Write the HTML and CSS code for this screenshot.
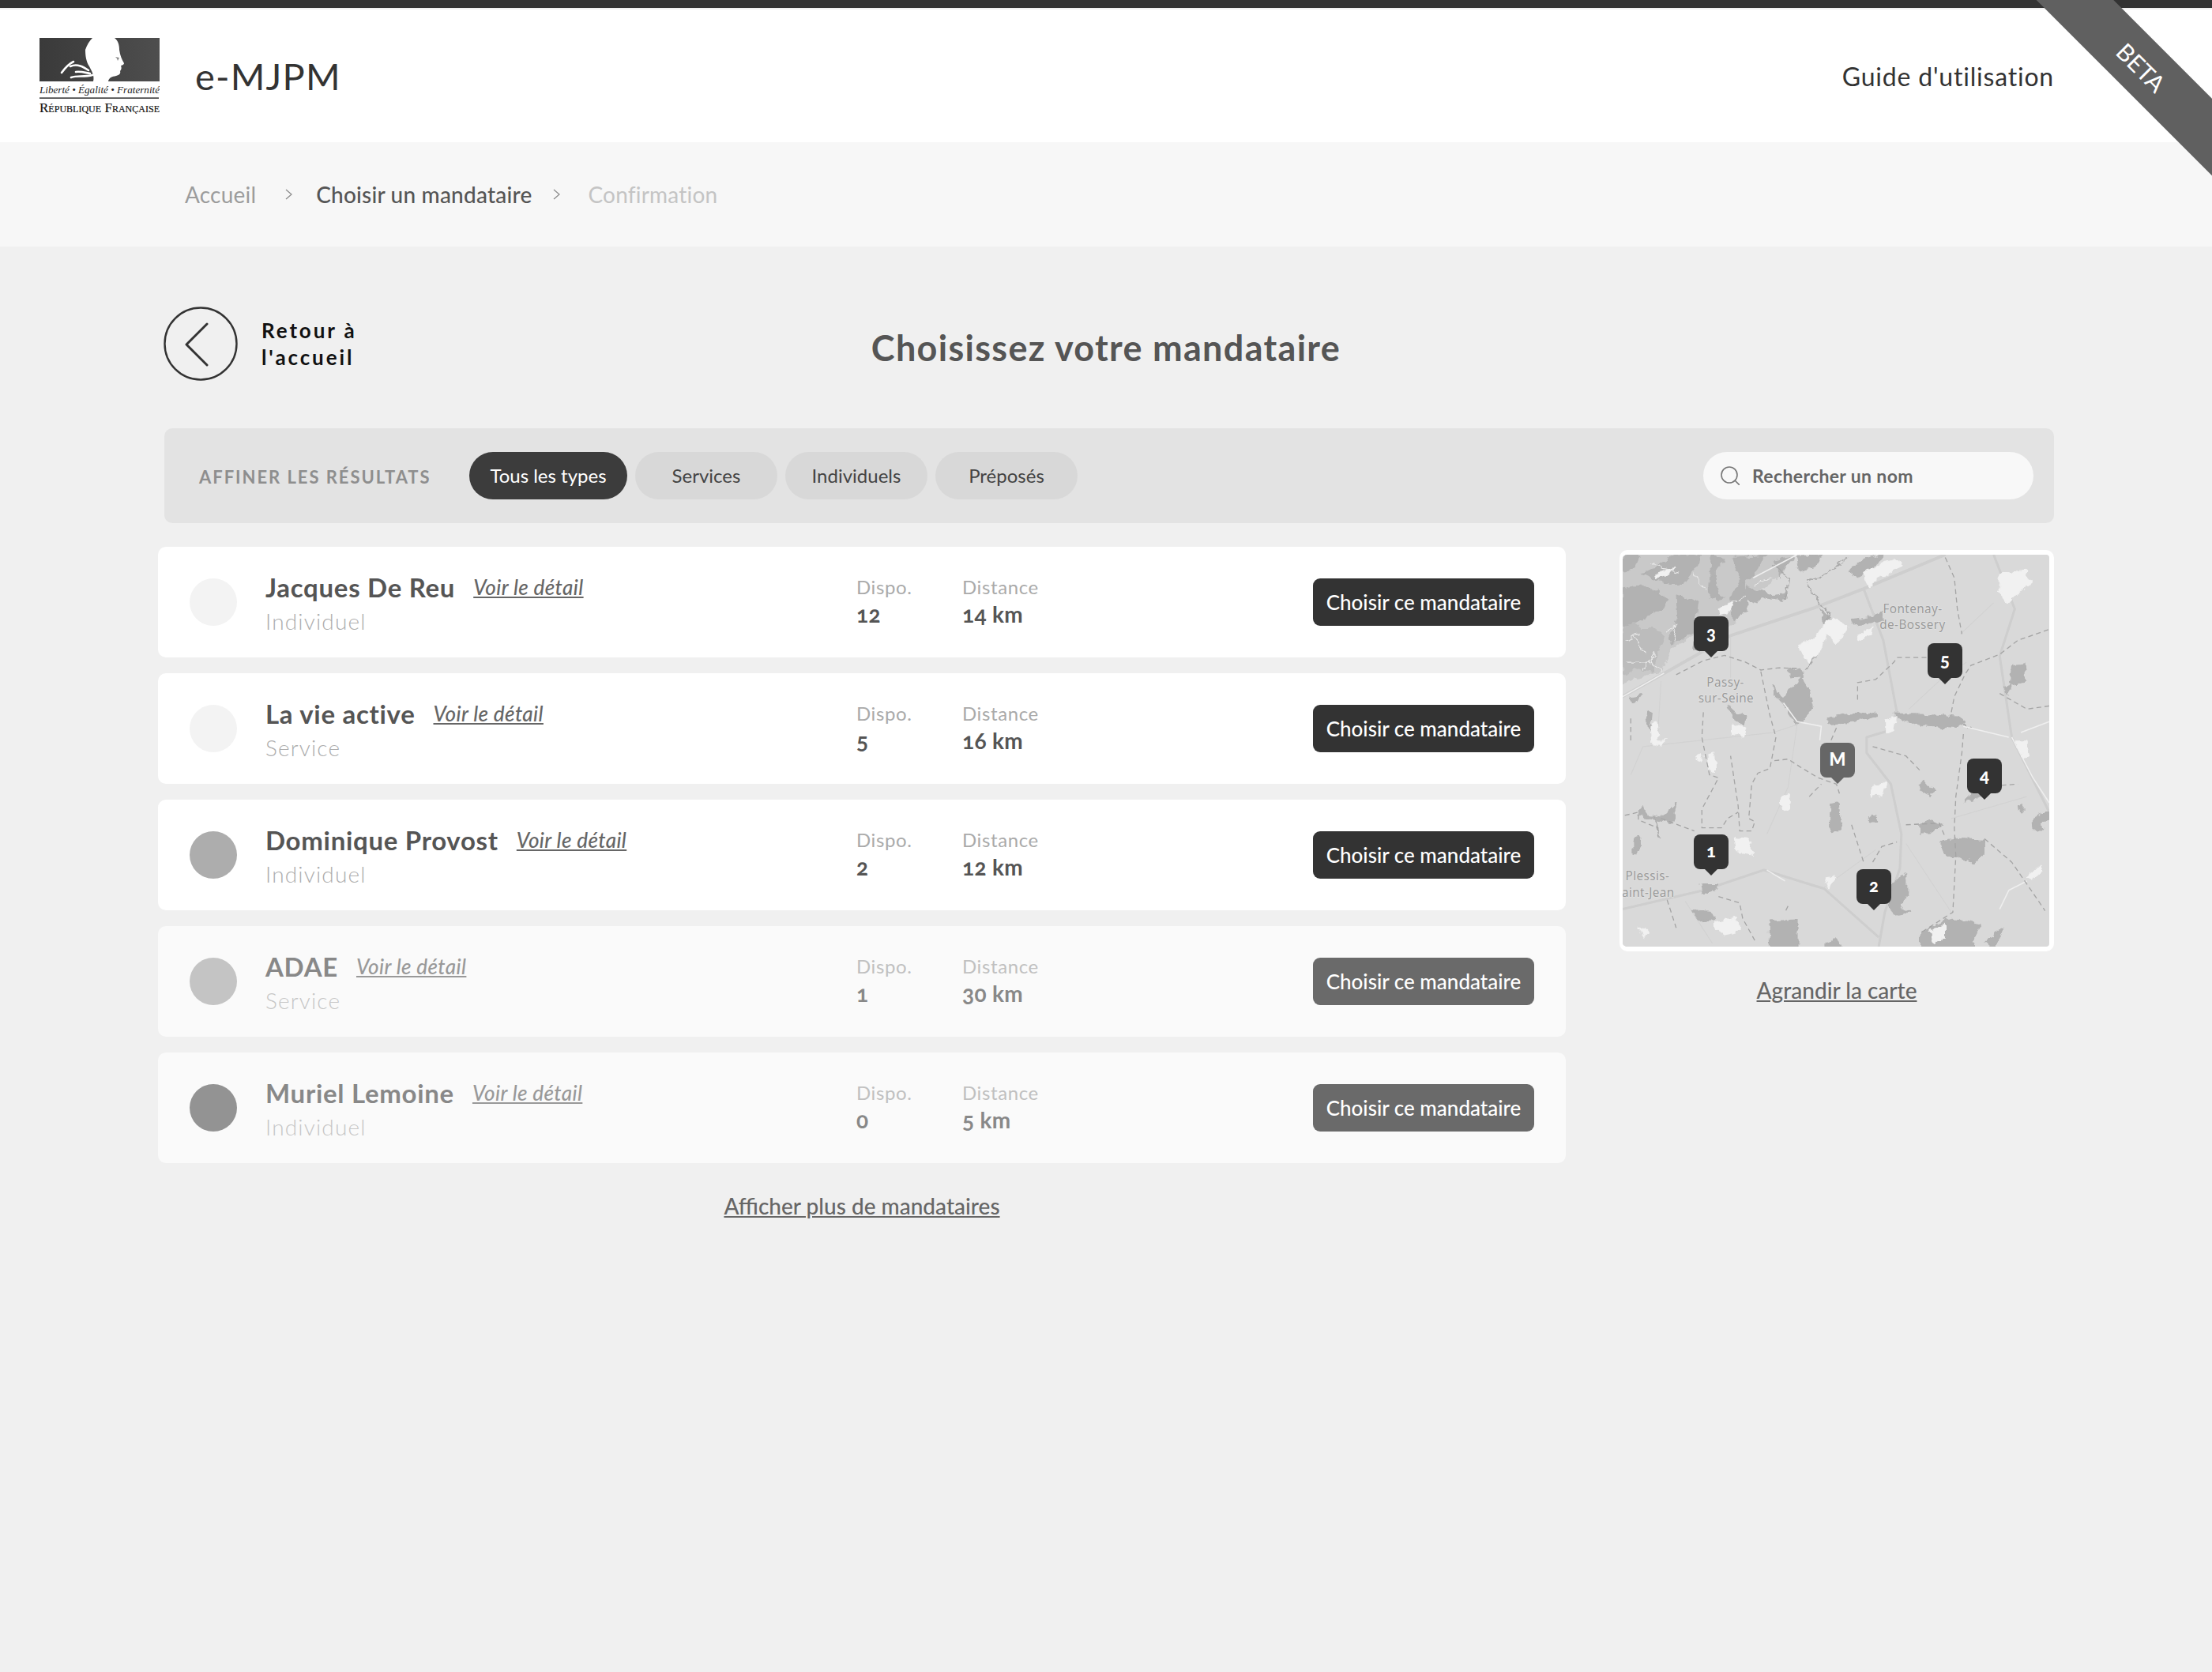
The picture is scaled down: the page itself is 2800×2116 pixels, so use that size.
FILE: index.html
```html
<!DOCTYPE html>
<html lang="fr">
<head>
    <meta charset="UTF-8">
    <meta name="viewport" content="width=device-width, initial-scale=1.0">
    <title>e-MJPM</title>
    <link rel="stylesheet" href="styles.css">
</head>
<body>
    <div class="ribbon-clip"><div class="ribbon"><span>BETA</span></div></div>
    <div class="topbar"></div>
    <header class="site-header">
        <svg class="logo" viewBox="0 0 152 96">
            <defs>
                <linearGradient id="logo-bg" x1="0" x2="1" y1="0" y2="0">
                    <stop offset="0" stop-color="#3a3a3a"/>
                    <stop offset="1" stop-color="#4e4e4e"/>
                </linearGradient>
            </defs>
            <rect width="152" height="55" fill="url(#logo-bg)"/>
            <path fill="#fff" d="M67 0 L95 0 C99 3 101 8 101 15 C102 22 104 27 107 32 C107 34 104 35 103 35 C104 37 104 40 102 42 C103 45 101 47 97 48 C92 49 88 50 87 55 L68 55 C70 48 66 42 63 36 C59 30 58 22 58 15 C60 9 63 4 67 0Z"/>
            <path fill="none" stroke="#fff" stroke-width="2.6" stroke-linecap="round" d="M28 44 C33 37 37 33 43 30 M39 36 C48 32 56 37 62 41 M40 50 C48 47 56 50 67 47 M46 43 C52 42 58 44 64 45"/>
            <path fill="#888" d="M96 24 L101 25 L99 29 L98 26Z"/>
            <text class="logo-motto" x="0" y="70" textLength="152" lengthAdjust="spacingAndGlyphs">Liberté • Égalité • Fraternité</text>
            <rect y="75.4" width="151" height="1.4" fill="#222"/>
            <text class="logo-name" x="0" y="93.5" textLength="152" lengthAdjust="spacingAndGlyphs">République Française</text>
        </svg>
        <span class="brand">e-MJPM</span>
        <a class="guide" href="#">Guide d'utilisation</a>
    </header>

    <nav class="breadcrumb">
        <a class="crumb" href="#">Accueil</a>
        <svg class="crumb-sep crumb-sep--first" viewBox="0 0 9 14"><path d="M1 1 L8 7 L1 13" fill="none" stroke="#888" stroke-width="1.2"/></svg>
        <span class="crumb crumb--current">Choisir un mandataire</span>
        <svg class="crumb-sep" viewBox="0 0 9 14"><path d="M1 1 L8 7 L1 13" fill="none" stroke="#888" stroke-width="1.2"/></svg>
        <span class="crumb crumb--next">Confirmation</span>
    </nav>

    <main class="page">
        <div class="page-head">
            <a class="back" href="#">
                <svg class="back-icon" viewBox="0 0 94 94">
                    <circle cx="47" cy="47" r="45.5" fill="none" stroke="#333" stroke-width="2.4"/>
                    <path d="M55 22 L29 48 L55 74" fill="none" stroke="#333" stroke-width="3" stroke-linecap="round" stroke-linejoin="round"/>
                </svg>
                <span class="back-label">Retour à<br>l'accueil</span>
            </a>
            <h1 class="page-title">Choisissez votre mandataire</h1>
        </div>

        <div class="filters">
            <span class="filters-label">AFFINER LES RÉSULTATS</span>
            <div class="pills">
                <button class="pill pill--active">Tous les types</button>
                <button class="pill">Services</button>
                <button class="pill">Individuels</button>
                <button class="pill">Préposés</button>
            </div>
            <div class="search">
                <svg class="search-icon" viewBox="0 0 24 24"><circle cx="11" cy="11" r="10" fill="none" stroke="#777" stroke-width="1.6"/><path d="M18 18 L24 24" stroke="#777" stroke-width="1.6"/></svg>
                <span>Rechercher un nom</span>
            </div>
        </div>

        <div class="results">
            <section class="list">
                <article class="row">
                    <span class="avatar avatar--pale"></span>
                    <div class="row-info">
                        <div class="row-title"><span class="name">Jacques De Reu</span><a class="detail" href="#">Voir le détail</a></div>
                        <div class="kind">Individuel</div>
                    </div>
                    <div class="stat stat--dispo"><span class="stat-label">Dispo.</span><span class="stat-value">12</span></div>
                    <div class="stat"><span class="stat-label">Distance</span><span class="stat-value">14 km</span></div>
                    <button class="choose">Choisir ce mandataire</button>
                </article>
                <article class="row">
                    <span class="avatar avatar--pale"></span>
                    <div class="row-info">
                        <div class="row-title"><span class="name">La vie active</span><a class="detail" href="#">Voir le détail</a></div>
                        <div class="kind">Service</div>
                    </div>
                    <div class="stat stat--dispo"><span class="stat-label">Dispo.</span><span class="stat-value">5</span></div>
                    <div class="stat"><span class="stat-label">Distance</span><span class="stat-value">16 km</span></div>
                    <button class="choose">Choisir ce mandataire</button>
                </article>
                <article class="row">
                    <span class="avatar avatar--mid"></span>
                    <div class="row-info">
                        <div class="row-title"><span class="name">Dominique Provost</span><a class="detail" href="#">Voir le détail</a></div>
                        <div class="kind">Individuel</div>
                    </div>
                    <div class="stat stat--dispo"><span class="stat-label">Dispo.</span><span class="stat-value">2</span></div>
                    <div class="stat"><span class="stat-label">Distance</span><span class="stat-value">12 km</span></div>
                    <button class="choose">Choisir ce mandataire</button>
                </article>
                <article class="row row--muted">
                    <span class="avatar avatar--light"></span>
                    <div class="row-info">
                        <div class="row-title"><span class="name">ADAE</span><a class="detail" href="#">Voir le détail</a></div>
                        <div class="kind">Service</div>
                    </div>
                    <div class="stat stat--dispo"><span class="stat-label">Dispo.</span><span class="stat-value">1</span></div>
                    <div class="stat"><span class="stat-label">Distance</span><span class="stat-value">30 km</span></div>
                    <button class="choose">Choisir ce mandataire</button>
                </article>
                <article class="row row--muted">
                    <span class="avatar avatar--dark"></span>
                    <div class="row-info">
                        <div class="row-title"><span class="name">Muriel Lemoine</span><a class="detail" href="#">Voir le détail</a></div>
                        <div class="kind">Individuel</div>
                    </div>
                    <div class="stat stat--dispo"><span class="stat-label">Dispo.</span><span class="stat-value">0</span></div>
                    <div class="stat"><span class="stat-label">Distance</span><span class="stat-value">5 km</span></div>
                    <button class="choose">Choisir ce mandataire</button>
                </article>
                <a class="more" href="#">Afficher plus de mandataires</a>
            </section>

            <aside class="side">
                <div class="map">
                    <svg class="map-art" viewBox="63 56 1411 1254" preserveAspectRatio="none">
                        <defs>
                            <filter id="rough" filterUnits="userSpaceOnUse" x="63" y="56" width="1411" height="1254">
                                <feTurbulence type="fractalNoise" baseFrequency="0.035" numOctaves="3" seed="4" result="noise"/>
                                <feDisplacementMap in="SourceGraphic" in2="noise" scale="26" xChannelSelector="R" yChannelSelector="G"/>
                                <feGaussianBlur stdDeviation="1.4"/>
                            </filter>
                            <filter id="soft" filterUnits="userSpaceOnUse" x="63" y="56" width="1411" height="1254">
                                <feGaussianBlur stdDeviation="1"/>
                            </filter>
                        </defs>
                        <rect x="63" y="56" width="1411" height="1254" fill="#d9d9d9"/>
                        <!-- roads -->
                        <g filter="url(#soft)" fill="none" stroke="#cecece" stroke-width="10" stroke-linejoin="round">
                            <path d="M63 510 L210 430 L420 315 L700 225 L860 165 L1130 56"/>
                            <path stroke-width="8" d="M860 165 L925 330 L970 560 L940 620 L870 640 L870 690 L950 790 L985 950 L980 1060 L930 1200 L910 1310"/>
                            <path stroke-width="8" d="M1290 56 L1360 230 L1310 380 L1350 640 L1474 880"/>
                            <path stroke-width="8" d="M63 1190 L330 1130 L530 1065 L730 1125 L910 1280"/>
                        </g>
                        <g filter="url(#soft)" fill="none" stroke="#d2d2d2" stroke-width="3">
                            <path d="M90 760 L130 670 L560 625 L640 600 L610 800 L540 950"/>
                            <path d="M190 460 L180 620 M420 320 L420 450 M1010 550 L1110 460 L1200 400 M1180 310 L1290 210 M1000 980 L1150 1200 M1150 900 L1400 830 M730 1120 L900 1000 M270 1165 L360 1300"/>
                        </g>
                        <!-- woods and water -->
                        <path filter="url(#rough)" fill="#c9c9c9" d="M50 40 L640 40 L590 120 L470 210 L430 280 L300 310 L225 360 L190 430 L50 470Z"/>
                        <g filter="url(#rough)" fill="#b2b2b2" stroke="#b2b2b2" stroke-width="4" stroke-linejoin="round">
                            <path d="M63 166 L130 150 L183 179 L213 200 L200 225 L148 251 L96 280 L63 285Z"/>
                            <path d="M244 183 L313 209 L296 301 L226 343 L217 327 L248 259Z"/>
                            <path fill="#bcbcbc" stroke="#bcbcbc" d="M63 293 L104 276 L122 293 L165 293 L200 318 L174 377 L165 428 L113 419 L63 445Z"/>
                            <path d="M130 116 L183 90 L239 57 L322 57 L313 90 L261 150 L217 150 L165 133Z"/>
                            <path d="M357 57 L400 74 L366 116 L379 183 L400 192 L348 200Z"/>
                            <path d="M427 65 L540 57 L505 107 L461 150 L479 234 L427 268 L418 200 L453 133Z"/>
                            <path d="M566 74 L627 65 L592 107 L583 133Z"/>
                            <path d="M470 158 L548 183 L610 175 L592 200 L540 192 L487 209 L461 192Z"/>
                            <path d="M640 60 L720 56 L690 100 L650 110Z"/>
                            <path d="M820 100 L860 70 L900 56 L930 60 L870 110 L830 130Z"/>
                            <path d="M63 56 L115 56 L100 95 L63 115Z"/>
                            <path d="M300 330 L335 320 L320 360 L295 365Z"/>
                            <path d="M610 425 L650 420 L660 440 L620 450Z"/>
                            <path d="M560 475 L590 520 L640 470 L650 440 L680 490 L690 540 L640 600 L600 540 L570 510Z"/>
                            <path d="M715 230 L750 260 L735 290Z"/>
                            <path d="M740 580 L800 565 L900 560 L905 575 L830 590 L750 600Z"/>
                            <path d="M960 565 L1060 568 L1170 575 L1195 595 L1170 610 L1080 605 L1000 590Z"/>
                            <path d="M1115 975 L1170 965 L1260 970 L1260 1010 L1220 1040 L1170 1020 L1135 1020Z"/>
                            <path d="M950 1110 L1000 1080 L1000 1150 L985 1185 L1010 1200 L960 1210 L945 1180Z"/>
                            <path d="M750 850 L775 845 L785 930 L760 945 L750 920Z"/>
                            <path d="M885 890 L900 895 L900 910 L885 910Z"/>
                            <path d="M320 1110 L380 1110 L370 1130 L325 1140Z"/>
                            <path d="M295 1195 L350 1200 L365 1225 L320 1230Z"/>
                            <path d="M1045 925 L1080 900 L1115 920 L1080 945 L1050 945Z"/>
                            <path d="M1040 790 L1060 775 L1090 810 L1080 830 L1045 810Z"/>
                            <path d="M1185 850 L1230 810 L1270 815 L1250 830Z"/>
                            <path d="M1350 410 L1390 405 L1395 460 L1345 470Z"/>
                            <path d="M1325 480 L1345 475 L1340 500 L1325 495Z"/>
                            <path d="M1420 900 L1450 885 L1480 885 L1480 905 L1445 910 L1450 935 L1425 935Z"/>
                            <path d="M1370 860 L1390 855 L1390 880 L1370 875Z"/>
                            <path d="M100 965 L120 960 L115 1010 L100 1010Z"/>
                            <path d="M150 560 L160 565 L155 610 L140 590Z"/>
                            <path d="M410 540 L435 560 L470 570 L465 600 L430 580Z"/>
                            <path d="M825 265 L880 258 L925 240 L930 260 L880 275 L830 280Z"/>
                            <path d="M85 515 L125 505 L105 530Z"/>
                            <path d="M115 890 L130 860 L135 885 L200 895 L240 855 L225 915 L190 905Z"/>
                            <path d="M548 1230 L640 1225 L640 1320 L548 1320Z"/>
                            <path d="M735 1300 L770 1285 L785 1320 L735 1320Z"/>
                            <path d="M1050 1265 L1150 1220 L1250 1240 L1220 1290 L1230 1320 L1050 1320Z"/>
                            <path d="M1260 1300 L1320 1250 L1290 1320Z"/>
                        </g>
                        <!-- thin streams -->
                        <g filter="url(#rough)" fill="none" stroke="#a8a8a8" stroke-width="4">
                            <path d="M670 150 L700 190 L745 240 L735 300 L700 380 L670 425"/>
                            <path d="M670 140 L720 125 L800 70"/>
                            <path d="M560 90 L610 130 L600 200"/>
                            <path d="M170 890 L185 960 M1190 600 L1220 610"/>
                        </g>
                        <!-- built-up areas -->
                        <g filter="url(#rough)" fill="#f1f1f1" stroke="#f1f1f1" stroke-width="3" stroke-linejoin="round">
                            <path d="M645 345 L700 325 L740 270 L760 258 L810 285 L770 340 L735 300 L710 370 L680 400 L660 375Z"/>
                            <path d="M860 115 L930 80 L975 70 L985 95 L910 130 L880 155Z"/>
                            <path d="M850 310 L895 285 L890 310 L840 330Z"/>
                            <path d="M1310 120 L1390 105 L1420 140 L1370 180 L1340 210 L1310 170Z"/>
                            <path d="M935 590 L965 575 L960 610 L935 630Z"/>
                            <path d="M1360 650 L1400 650 L1410 700 L1385 705Z"/>
                            <path d="M1400 1090 L1445 1045 L1450 1070 L1410 1100Z"/>
                            <path d="M425 600 L470 610 L460 640 L425 630Z"/>
                            <path d="M155 600 L175 590 L180 650 L210 650 L160 670Z"/>
                            <path d="M345 695 L368 690 L370 750 L350 740Z"/>
                            <path d="M305 705 L325 700 L320 720Z"/>
                            <path d="M435 960 L480 965 L490 1010 L440 1000Z"/>
                            <path d="M730 1090 L765 1085 L745 1120Z"/>
                            <path d="M370 1230 L440 1220 L450 1260 L400 1270 L370 1255Z"/>
                            <path d="M115 1250 L145 1255 L130 1285Z"/>
                            <path d="M1080 1260 L1125 1240 L1125 1285 L1090 1295Z"/>
                            <path d="M880 805 L935 785 L925 825 L885 830Z"/>
                            <path d="M590 830 L615 820 L610 865 L590 870Z"/>
                            <path d="M175 120 L235 95 L220 115 L180 130Z"/>
                            <path d="M380 230 L430 210 L410 240 L385 245Z"/>
                        </g>
                        <g filter="url(#rough)" fill="none" stroke="#e9e9e9" stroke-width="3" stroke-linejoin="round">
                            <path d="M150 80 L200 100 L250 110 M70 400 L150 400 L190 430 M210 300 L240 280 L230 340 M420 210 L470 190 M100 320 L140 370 M300 120 L340 170 M70 330 L120 310 M130 420 L170 370 M500 150 L560 130"/>
                        </g>
                        <g filter="url(#soft)" fill="none" stroke="#efefef" stroke-width="4" stroke-linejoin="round">
                            <path d="M495 130 L640 56"/>
                            <path d="M595 530 L640 590 L720 605 L715 650"/>
                            <path d="M1190 605 L1340 640 M1380 625 L1474 590"/>
                            <path d="M1350 640 L1420 770 L1474 850"/>
                            <path d="M63 510 L200 435"/>
                            <path d="M540 1065 L600 1100"/>
                            <path d="M1310 1190 L1340 1130 L1400 1100"/>
                        </g>
                        <!-- tracks -->
                        <g filter="url(#soft)" fill="none" stroke="#a4a4a4" stroke-width="3.4" stroke-dasharray="16 11">
                            <path d="M240 440 L330 395 L400 378 L470 400 L520 425 L580 418 L640 420"/>
                            <path d="M520 430 L550 570 L570 640 L550 740 L510 755 L490 790 L480 900 L500 910 L490 940 L450 940 L445 860 L420 700"/>
                            <path d="M330 560 L325 640 L350 760 L380 770 L325 870 L325 930 L390 930 L410 900 L445 880"/>
                            <path d="M565 715 L610 710 L650 735 L710 770 L770 790 L780 820"/>
                            <path d="M680 830 L720 790"/>
                            <path d="M890 670 L1000 700 L1050 750"/>
                            <path d="M1190 630 L1185 690 L1165 830 L1160 930 L1165 1020 L1155 1200 L1050 1265"/>
                            <path d="M840 520 L840 465 L900 455 L960 400 L970 385 L1070 385"/>
                            <path d="M1150 560 L1160 510 L1195 440 L1215 410 L1310 375 L1370 330 L1474 295"/>
                            <path d="M1130 65 L1160 130 L1170 230 L1185 310"/>
                            <path d="M1000 920 L1110 915 L1130 960"/>
                            <path d="M1260 965 L1350 1040 L1400 1110 L1460 1195"/>
                            <path d="M820 920 L860 1040"/>
                            <path d="M890 1040 L920 990 L970 975"/>
                            <path d="M1235 800 L1370 790"/>
                            <path d="M1310 500 L1400 550 L1474 540"/>
                            <path d="M210 1160 L240 1250 M380 1150 L450 1170 L460 1220 L500 1290 M610 1180 L600 1200"/>
                            <path d="M70 890 L115 880 L115 905 L180 930 L180 960 M190 900 L300 940"/>
                            <path d="M90 580 L90 650 M770 610 L730 700"/>
                        </g>
                        <g class="map-labels">
                            <text x="1022" y="243">Fontenay-</text>
                            <text x="1022" y="293">de-Bossery</text>
                            <text x="403" y="478">Passy-</text>
                            <text x="405" y="530">sur-Seine</text>
                            <text x="145" y="1098">Plessis-</text>
                            <text x="136" y="1150">Saint-Jean</text>
                        </g>
                    </svg>
                    <span class="pin pin--3">3</span>
                    <span class="pin pin--5">5</span>
                    <span class="pin pin--m">M</span>
                    <span class="pin pin--4">4</span>
                    <span class="pin pin--1">1</span>
                    <span class="pin pin--2">2</span>
                </div>
                <a class="zoom-map" href="#">Agrandir la carte</a>
            </aside>
        </div>
    </main>
</body>
</html>
```
FILE: styles.css
```css
* {
    box-sizing: border-box;
}
html, body {
    margin: 0;
    height: 100%;
}
body {
    position: relative;
    overflow: hidden;
    background-color: #f0f0f0;
    color: #333;
    font-family: "Lato", "Noto Sans", sans-serif;
    font-variant-numeric: oldstyle-nums;
}
a {
    color: inherit;
}
button {
    font-family: inherit;
    border: none;
    cursor: pointer;
}

/* ribbon */
.ribbon-clip {
    position: absolute;
    top: 0;
    right: 0;
    width: 300px;
    height: 300px;
    overflow: hidden;
}
.ribbon {
    position: absolute;
    top: 48px;
    left: 9px;
    width: 400px;
    height: 69px;
    background-color: #606060;
    color: #fff;
    font-size: 30px;
    line-height: 69px;
    text-align: center;
    transform: rotate(45deg);
}
.ribbon span {
    position: relative;
    left: 3px;
    top: 1px;
}

/* header */
.topbar {
    height: 12px;
    background-color: #333;
    border-bottom: 2px solid #f0f0f0;
}
.site-header {
    display: flex;
    align-items: center;
    height: 168px;
    padding: 0 200px 0 50px;
    background-color: #fff;
}
.logo {
    width: 152px;
    height: 96px;
    flex: none;
}
.logo-motto {
    font-family: "Liberation Serif", serif;
    font-style: italic;
    font-size: 12.5px;
    fill: #222;
}
.logo-name {
    font-family: "Liberation Serif", serif;
    font-variant: small-caps;
    font-size: 17px;
    fill: #111;
    stroke: #111;
    stroke-width: 0.2px;
}
.brand {
    margin-left: 45px;
    font-size: 47px;
    letter-spacing: 1.2px;
    color: #333;
}
.guide {
    margin-left: auto;
    font-size: 32px;
    letter-spacing: 0.8px;
    text-decoration: none;
}

/* breadcrumb */
.breadcrumb {
    display: flex;
    align-items: center;
    height: 132px;
    padding-left: 234px;
    background-color: #f7f7f7;
    font-size: 28px;
    letter-spacing: 0.2px;
}
.crumb {
    color: #9c9c9c;
    text-decoration: none;
}
.crumb--current {
    color: #555;
    font-weight: 500;
}
.crumb--next {
    color: #c4c4c4;
}
.crumb-sep {
    width: 9px;
    height: 14px;
    margin: 0 35px 0 27px;
}
.crumb-sep--first {
    margin: 0 30px 0 37px;
}

/* page */
.page {
    width: 2400px;
    margin-left: 200px;
    padding-top: 76px;
}
.page-head {
    display: grid;
    grid-template-columns: 1fr auto 1fr;
    align-items: center;
    height: 94px;
    margin-left: 8px;
}
.back {
    display: flex;
    align-items: center;
    gap: 30px;
    margin-left: -1px;
    text-decoration: none;
}
.back-icon {
    width: 94px;
    height: 94px;
}
.back-label {
    font-size: 26px;
    font-weight: 700;
    line-height: 34px;
    letter-spacing: 2.9px;
    color: #111;
}
.page-title {
    margin: 9px 0 0;
    font-size: 45px;
    font-weight: 700;
    letter-spacing: 1.3px;
    color: #555;
    transform: translateX(-4px);
}

/* filters */
.filters {
    display: flex;
    align-items: center;
    height: 120px;
    margin: 60px 0 0 8px;
    padding: 0 26px 0 44px;
    background-color: #e3e3e3;
    border-radius: 10px;
}
.filters-label {
    width: 342px;
    margin-top: 3px;
    font-size: 22px;
    font-weight: 700;
    letter-spacing: 1.95px;
    color: #8e8e8e;
}
.pills {
    display: flex;
    gap: 10px;
}
.pill {
    width: 180px;
    height: 60px;
    padding: 0 0 2px;
    background-color: #d8d8d8;
    border-radius: 30px;
    color: #444;
    font-size: 24px;
}
.pill--active {
    width: 200px;
    background-color: #3c3c3c;
    color: #fff;
}
.search {
    display: flex;
    align-items: center;
    gap: 16px;
    width: 418px;
    height: 60px;
    margin-left: auto;
    padding-left: 22px;
    background-color: #f8f8f8;
    border-radius: 30px;
    color: #666;
    font-size: 23px;
    font-weight: 700;
    letter-spacing: 0.35px;
}
.search-icon {
    width: 24px;
    height: 24px;
}

/* results */
.results {
    display: grid;
    grid-template-columns: 1782px 550px;
    justify-content: space-between;
    margin-top: 30px;
}
.list {
    display: flex;
    flex-direction: column;
    gap: 20px;
}
.row {
    display: flex;
    align-items: center;
    height: 140px;
    padding: 0 40px;
    background-color: #fff;
    border-radius: 10px;
}
.avatar {
    width: 60px;
    height: 60px;
    flex: none;
    border-radius: 50%;
}
.avatar--pale { background-color: #f3f3f3; }
.avatar--mid { background-color: #adadad; }
.avatar--light { background-color: #c4c4c4; }
.avatar--dark { background-color: #939393; }
.row-info {
    width: 748px;
    margin-left: 36px;
}
.row-title {
    display: flex;
    align-items: baseline;
    gap: 23px;
    padding-top: 2px;
}
.name {
    font-size: 33px;
    font-weight: 700;
    letter-spacing: 0.7px;
    color: #555;
}
.detail {
    position: relative;
    top: -3px;
    font-size: 26px;
    font-style: italic;
    font-weight: 500;
    letter-spacing: 0.4px;
    color: #666;
}
.kind {
    margin-top: 6px;
    font-size: 28px;
    font-weight: 300;
    letter-spacing: 1.15px;
    color: #adadad;
}
.stat {
    display: flex;
    flex-direction: column;
    gap: 3px;
    margin-bottom: 3px;
}
.stat--dispo {
    width: 134px;
}
.stat-label {
    font-size: 24px;
    letter-spacing: 0.6px;
    color: #aaa;
}
.stat-value {
    font-size: 28px;
    font-weight: 700;
    letter-spacing: 0.3px;
    color: #555;
}
.choose {
    width: 280px;
    height: 60px;
    margin-left: auto;
    padding: 0 0 1px;
    background-color: #333;
    border-radius: 9px;
    color: #fff;
    font-size: 26px;
    font-weight: 500;
}
.row--muted {
    background-color: #fafafa;
}
.row--muted .name { color: #888; }
.row--muted .detail { color: #999; }
.row--muted .kind { color: #c6c6c6; }
.row--muted .stat-label { color: #c0c0c0; }
.row--muted .stat-value { color: #888; }
.row--muted .choose { background-color: #6a6a6a; }
.more {
    margin-top: 17px;
    text-align: center;
    font-size: 28px;
    font-weight: 500;
    color: #666;
}

/* map */
.side {
    display: flex;
    flex-direction: column;
    align-items: center;
    padding-top: 4px;
}
.map {
    position: relative;
    width: 550px;
    height: 508px;
    border: solid #fff;
    border-width: 6px 6px 6px 4px;
    border-radius: 10px;
    background-color: #d9d9d9;
}
.map-art {
    display: block;
    width: 540px;
    height: 496px;
    border-radius: 6px;
}
.map-labels {
    font-family: "Noto Sans", sans-serif;
    font-size: 40px;
    letter-spacing: 1px;
    text-anchor: middle;
    fill: #9a9a9a;
    stroke: #e6e6e6;
    stroke-width: 3px;
    paint-order: stroke;
}
.pin {
    position: absolute;
    width: 44px;
    height: 44px;
    background-color: #333;
    border-radius: 8px;
    color: #fff;
    font-size: 22px;
    font-weight: 900;
    line-height: 42px;
    text-align: center;
}
.pin::after {
    content: "";
    position: absolute;
    left: 14px;
    top: 44px;
    border-style: solid;
    border-width: 8px 8px 0;
    border-color: #333 transparent transparent;
}
/* offsets are from the inner edge of the map */
.pin--3 { left: 90px; top: 78px; }
.pin--5 { left: 386px; top: 112px; }
.pin--m { left: 250px; top: 238px; background-color: #666; }
.pin--m::after { border-top-color: #666; }
.pin--4 { left: 436px; top: 258px; }
.pin--1 { left: 90px; top: 354px; }
.pin--2 { left: 296px; top: 398px; }
.zoom-map {
    margin-top: 32px;
    font-size: 28px;
    font-weight: 500;
    color: #666;
}
```
